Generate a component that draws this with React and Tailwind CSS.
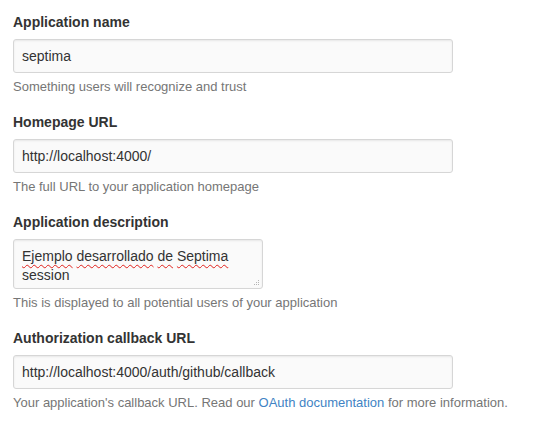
import { useState } from "react";

const fields = [
  {
    label: "Application name",
    value: "septima",
    note: "Something users will recognize and trust",
  },
  {
    label: "Homepage URL",
    value: "http://localhost:4000/",
    note: "The full URL to your application homepage",
  },
];

function FieldLabel({ children }) {
  return (
    <label className="block h-5 text-sm leading-5 font-bold text-[#333]">
      {children}
    </label>
  );
}

function Note({ children }) {
  return (
    <p className="mt-[6px] h-4 text-[13px] leading-4 text-[#767676]">
      {children}
    </p>
  );
}

function TextInput({ value }) {
  const [text, setText] = useState(value);
  return (
    <input
      type="text"
      value={text}
      onChange={(e) => setText(e.target.value)}
      className="mt-[7px] block h-[34px] w-[440px] rounded-[3px] border border-[#d6d6d6] bg-[#fafafa] px-2 text-sm text-[#333] shadow-[inset_0_1px_2px_rgba(0,0,0,0.075)] outline-none"
    />
  );
}

function Misspelled({ children }) {
  return (
    <span className="underline decoration-wavy decoration-[#e0201b] decoration-1 underline-offset-[3px]">
      {children}
    </span>
  );
}

function DescriptionBox() {
  return (
    <div className="relative mt-[7px] h-[50px] w-[250px] rounded-[3px] border border-[#d6d6d6] bg-[#fafafa] px-2 pt-[7px] text-sm leading-[19px] text-[#333] shadow-[inset_0_1px_2px_rgba(0,0,0,0.075)]">
      <Misspelled>Ejemplo</Misspelled> <Misspelled>desarrollado</Misspelled>{" "}
      <Misspelled>de</Misspelled> <Misspelled>Septima</Misspelled>
      <br />
      session
      {/* resize grip */}
      <svg
        className="absolute right-[2px] bottom-[2px]"
        width="7"
        height="7"
        viewBox="0 0 7 7"
      >
        <rect x="5" y="1" width="1" height="1" fill="#b5b5b5" />
        <rect x="3" y="3" width="1" height="1" fill="#b5b5b5" />
        <rect x="5" y="3" width="1" height="1" fill="#b5b5b5" />
        <rect x="1" y="5" width="1" height="1" fill="#b5b5b5" />
        <rect x="3" y="5" width="1" height="1" fill="#b5b5b5" />
        <rect x="5" y="5" width="1" height="1" fill="#b5b5b5" />
      </svg>
    </div>
  );
}

export default function App() {
  return (
    <div className="min-h-[425px] w-[536px] bg-white px-[13px] pt-[12px] font-['Liberation_Sans',Arial,sans-serif]">
      {/* ---------- name + homepage ---------- */}
      {fields.map((field) => (
        <div key={field.label} className="mb-[17px]">
          <FieldLabel>{field.label}</FieldLabel>
          <TextInput value={field.value} />
          <Note>{field.note}</Note>
        </div>
      ))}

      {/* ---------- description ---------- */}
      <div className="mb-[17px]">
        <FieldLabel>Application description</FieldLabel>
        <DescriptionBox />
        <Note>This is displayed to all potential users of your application</Note>
      </div>

      {/* ---------- callback ---------- */}
      <div>
        <FieldLabel>Authorization callback URL</FieldLabel>
        <TextInput value="http://localhost:4000/auth/github/callback" />
        <Note>
          Your application's callback URL. Read our{" "}
          <a href="#" className="text-[#4183c4]">
            OAuth documentation
          </a>{" "}
          for more information.
        </Note>
      </div>
    </div>
  );
}
